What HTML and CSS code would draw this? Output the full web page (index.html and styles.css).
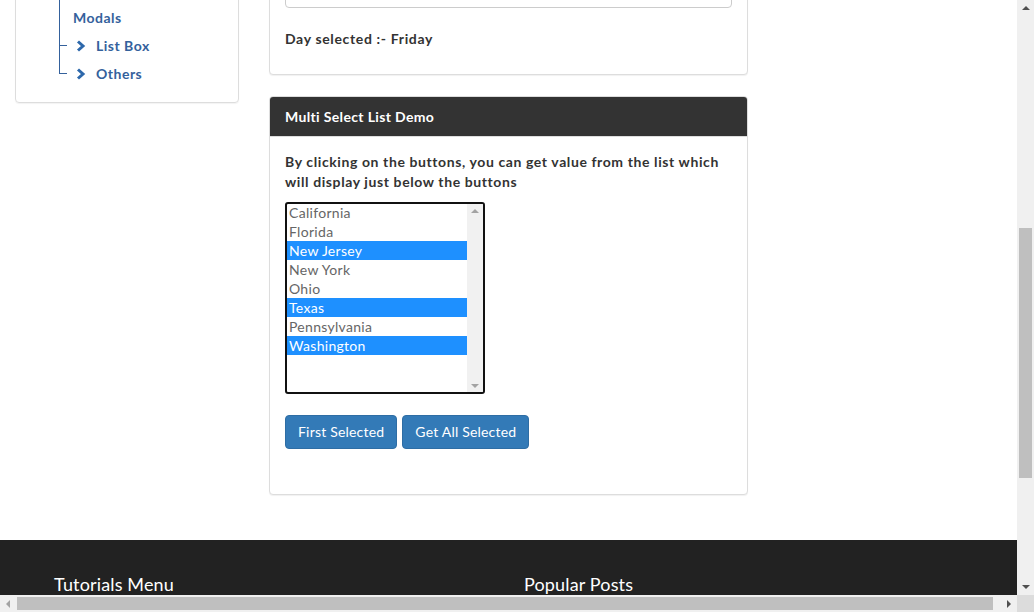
FILE: index.html
```html
<!DOCTYPE html>
<html lang="en">
<head>
<meta charset="utf-8">
<title>Multi Select List Demo</title>
<link rel="stylesheet" href="styles.css">
</head>
<body>
<div class="screen">
  <div class="viewport">
    <div class="page">
      <aside class="sidebar">
        <div class="side-box">
          <ul class="tree">
            <li class="node">Modals</li>
            <li class="leaf"><svg class="chev" width="10" height="12" viewBox="0 0 10 12"><path d="M2 1.5 L7 6 L2 10.5" fill="none" stroke="#2d68ab" stroke-width="3" stroke-linejoin="miter"/></svg>List Box</li>
            <li class="leaf"><svg class="chev" width="10" height="12" viewBox="0 0 10 12"><path d="M2 1.5 L7 6 L2 10.5" fill="none" stroke="#2d68ab" stroke-width="3" stroke-linejoin="miter"/></svg>Others</li>
          </ul>
        </div>
      </aside>
      <main class="main">
        <section class="panel panel-first">
          <div class="panel-body">
            <div class="fake-select"></div>
            <p class="day">Day selected :- Friday</p>
          </div>
        </section>
        <section class="panel panel-second">
          <div class="panel-heading">Multi Select List Demo</div>
          <div class="panel-body">
            <p class="intro">By clicking on the buttons, you can get value from the list which will display just below the buttons</p>
            <div class="listbox">
              <div class="options">
                <div class="opt">California</div>
                <div class="opt">Florida</div>
                <div class="opt sel">New Jersey</div>
                <div class="opt">New York</div>
                <div class="opt">Ohio</div>
                <div class="opt sel">Texas</div>
                <div class="opt">Pennsylvania</div>
                <div class="opt sel">Washington</div>
              </div>
              <div class="lb-scroll">
                <span class="tri tri-up small"></span>
                <span class="tri tri-down small"></span>
              </div>
            </div>
            <div class="buttons">
              <button class="btn">First Selected</button>
              <button class="btn">Get All Selected</button>
            </div>
            <div class="result"></div>
          </div>
        </section>
      </main>
    </div>
    <footer class="footer">
      <div class="footer-cols">
        <h3 class="footer-title">Tutorials Menu</h3>
        <h3 class="footer-title">Popular Posts</h3>
      </div>
    </footer>
  </div>
  <div class="vscroll">
    <span class="tri tri-up"></span>
    <div class="vthumb"></div>
    <span class="tri tri-down"></span>
  </div>
  <div class="hscroll">
    <span class="tri tri-left"></span>
    <div class="hthumb"></div>
    <span class="tri tri-right"></span>
  </div>
  <div class="corner"></div>
</div>
</body>
</html>
```

FILE: styles.css
```css
* { box-sizing: border-box; }
html, body { margin: 0; padding: 0; overflow: hidden; background: #fff; }
body {
  font-family: "Lato", "Noto Sans", sans-serif;
  font-size: 14px;
  line-height: 20px;
  color: #333;
}
.screen {
  display: grid;
  grid-template-columns: 1017px 17px;
  grid-template-rows: 595px 17px;
  width: 1034px;
  height: 612px;
}
.viewport {
  overflow: hidden;
  background: #fff;
}
.page {
  display: flex;
  align-items: flex-start;
  padding-left: 15px;
}
.sidebar { width: 224px; margin-right: 30px; }
.side-box {
  margin-top: -30px;
  border: 1px solid #ddd;
  border-radius: 4px;
  box-shadow: 0 1px 1px rgba(0,0,0,0.05);
  padding: 33px 0 14px;
}
.tree {
  list-style: none;
  margin: 0 0 0 43px;
  padding: 0;
  position: relative;
  font-weight: 700;
  letter-spacing: 0.5px;
  color: #34619c;
}
.tree::before {
  content: "";
  position: absolute;
  left: 0;
  top: -40px;
  bottom: 14px;
  border-left: 1px solid #34619c;
}
.tree li { line-height: 28px; height: 28px; position: relative; }
.node { padding-left: 14px; }
.leaf { padding-left: 17px; display: flex; align-items: center; }
.leaf::before {
  content: "";
  position: absolute;
  left: 0;
  top: 13px;
  width: 8px;
  border-top: 1px solid #34619c;
}
.chev { margin-right: 10px; flex: none; }

.main { width: 479px; }
.panel {
  border: 1px solid #ddd;
  border-radius: 4px;
  box-shadow: 0 1px 1px rgba(0,0,0,0.06);
  background: #fff;
}
.panel-first { margin-top: -42px; }
.panel-second { margin-top: 21px; overflow: hidden; }
.panel-body { padding: 15px; }
.fake-select {
  height: 34px;
  border: 1px solid #ccc;
  border-radius: 4px;
}
.day { margin: 21px 0 10px; font-weight: 700; letter-spacing: 0.65px; }
.panel-heading {
  background: #333;
  color: #fff;
  font-weight: 700;
  letter-spacing: 0.35px;
  padding: 10px 15px;
  height: 40px;
  border-bottom: 1px solid #ddd;
}
.intro { margin: 0 0 10px; font-weight: 700; letter-spacing: 0.6px; }
.listbox {
  width: 200px;
  height: 192px;
  border: 2px solid #111;
  border-radius: 3px;
  display: grid;
  grid-template-columns: 1fr 16px;
  overflow: hidden;
}
.options { margin-top: -1px; }
.opt {
  height: 19px;
  line-height: 19px;
  padding-left: 2px;
  color: #666;
  font-weight: 400;
  letter-spacing: 0.3px;
}
.opt.sel { background: #1e90ff; color: #fff; }
.lb-scroll {
  background: #f1f1f1;
  display: flex;
  flex-direction: column;
  justify-content: space-between;
  align-items: center;
  padding: 5px 0 4px;
}
.buttons { display: flex; gap: 5px; margin-top: 21px; }
.btn {
  font-family: inherit;
  font-size: 14px;
  line-height: 20px;
  letter-spacing: 0.2px;
  color: #fff;
  background: #337ab7;
  border: 1px solid #2e6da4;
  border-radius: 4px;
  padding: 6px 12px;
  height: 34px;
}
.result { height: 30px; }

.footer {
  margin-top: 45px;
  background: #222;
  height: 120px;
  padding: 33px 0 0 54px;
}
.footer-cols { display: grid; grid-template-columns: 470px 470px; }
.footer-title {
  margin: 0;
  color: #fff;
  font-weight: 400;
  font-size: 18px;
  line-height: 22px;
  letter-spacing: 0.15px;
}

.tri { width: 0; height: 0; display: block; }
.tri-up { border-left: 4px solid transparent; border-right: 4px solid transparent; border-bottom: 4px solid #505050; }
.tri-down { border-left: 4px solid transparent; border-right: 4px solid transparent; border-top: 4px solid #505050; }
.tri-left { border-top: 4px solid transparent; border-bottom: 4px solid transparent; border-right: 4px solid #a3a3a3; }
.tri-right { border-top: 4px solid transparent; border-bottom: 4px solid transparent; border-left: 4px solid #505050; }
.tri-up.small { border-bottom-color: #a3a3a3; }
.tri-down.small { border-top-color: #a3a3a3; }

.vscroll {
  background: #f0f0f0;
  display: flex;
  flex-direction: column;
  align-items: center;
  padding: 6px 0 6px;
}
.vthumb {
  width: 13px;
  height: 250px;
  background: #bfbfbf;
  margin-top: 218px;
  margin-bottom: auto;
}
.hscroll {
  grid-column: 1 / 3;
  grid-row: 2;
  width: 1017px;
  background: #f0f0f0;
  display: flex;
  align-items: center;
  padding: 0 6px;
}
.hthumb {
  width: 976px;
  height: 13px;
  background: #bfbfbf;
  margin-left: 7px;
  margin-right: auto;
}
.corner { grid-column: 2; grid-row: 2; background: #dcdcdc; }
```
